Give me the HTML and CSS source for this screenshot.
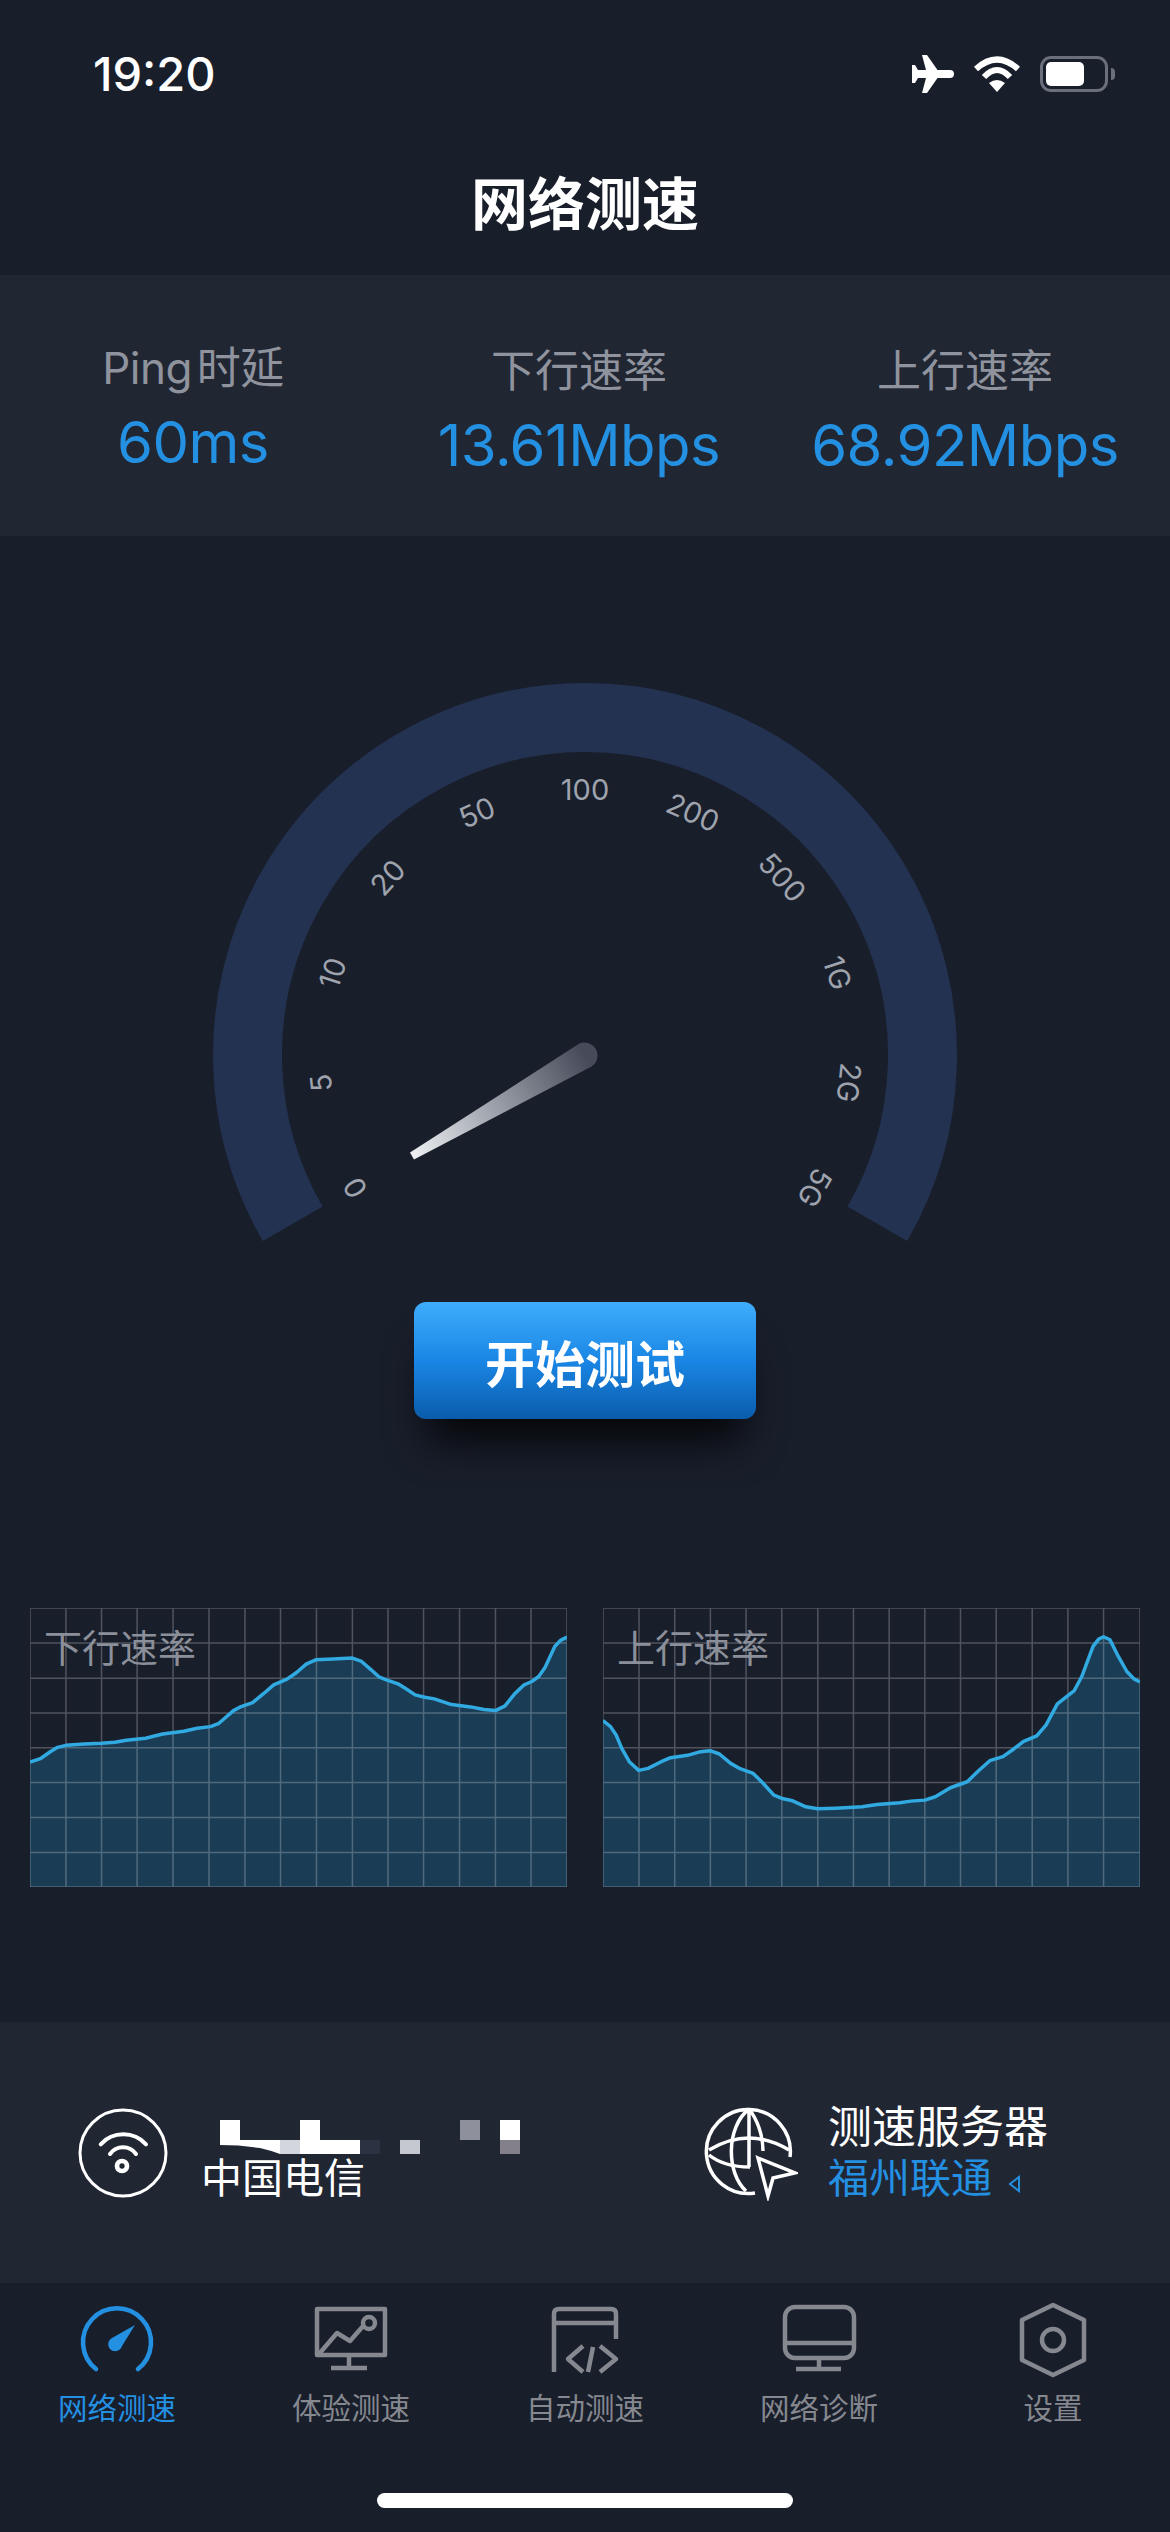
FILE: index.html
```html
<!DOCTYPE html>
<html lang="zh-CN">
<head>
  <meta charset="UTF-8">
  <meta name="viewport" content="width=device-width, initial-scale=1.0">
  <title>网络测速</title>
  <link rel="stylesheet" href="styles.css">
</head>
<body>
  <div class="status">
    <span class="time">19:20</span>
    <div class="status-icons">
      <svg width="42" height="38" viewBox="0 0 42 38"><path fill="#fff" d="M38 15H25.5L15 0H10L14 15H6L3 10H0V28H3L6 23H14L10 38H15L25.5 23H38A4 4 0 0 0 38 15Z"/></svg>
      <svg width="48" height="36" viewBox="0 0 48 36"><path fill="none" stroke="#fff" stroke-width="6" d="M3 13Q24 -6 45 13M11 21Q24 7 37 21"/><path fill="#fff" d="M24 36L16 27Q24 21 32 27Z"/></svg>
      <div class="battery-wrap">
        <div class="battery"><div class="battery-level"></div></div>
        <div class="battery-nub"></div>
      </div>
    </div>
  </div>

  <h1 class="title">网络测速</h1>

  <div class="stats">
    <div class="stat stat-ping">
      <div class="stat-label">Ping 时延</div>
      <div class="stat-value">60ms</div>
    </div>
    <div class="stat">
      <div class="stat-label">下行速率</div>
      <div class="stat-value">13.61Mbps</div>
    </div>
    <div class="stat">
      <div class="stat-label">上行速率</div>
      <div class="stat-value">68.92Mbps</div>
    </div>
  </div>

  <div class="gauge-section">
    <svg class="gauge" width="760" height="580" viewBox="0 0 760 580">
      <defs>
        <linearGradient id="needleGrad" gradientUnits="userSpaceOnUse" x1="207" y1="486" x2="380" y2="385">
          <stop offset="0" stop-color="#eef0f2"/>
          <stop offset="0.45" stop-color="#a0a6ae"/>
          <stop offset="1" stop-color="#474a59"/>
        </linearGradient>
      </defs>
      <path class="gauge-arc" d="M87.7 553.75A337.5 337.5 0 1 1 672.3 553.75"/>
      <g class="gauge-labels">
        <text x="380" y="130" transform="rotate(-120 380 385)">0</text>
        <text x="380" y="130" transform="rotate(-96 380 385)">5</text>
        <text x="380" y="130" transform="rotate(-72 380 385)">10</text>
        <text x="380" y="130" transform="rotate(-48 380 385)">20</text>
        <text x="380" y="130" transform="rotate(-24 380 385)">50</text>
        <text x="380" y="130">100</text>
        <text x="380" y="130" transform="rotate(24 380 385)">200</text>
        <text x="380" y="130" transform="rotate(48 380 385)">500</text>
        <text x="380" y="130" transform="rotate(72 380 385)">1G</text>
        <text x="380" y="130" transform="rotate(96 380 385)">2G</text>
        <text x="380" y="130" transform="rotate(120 380 385)">5G</text>
      </g>
      <path fill="url(#needleGrad)" d="M205 482.5L374 373.8A13 13 0 0 1 387 396.2L209 489.5Z"/>
    </svg>
    <button class="start-btn">开始测试</button>
  </div>

  <div class="charts">
    <div class="chart">
      <svg class="chart-svg" viewBox="78 85 1404 835" preserveAspectRatio="none">
        <polygon class="chart-fill" points="78,920 78,546 105,536 130,516 150,502 172,496 220,492 265,490 300,487 330,481 380,475 425,462 480,454 515,445 550,440 572,430 590,412 610,392 630,380 660,368 690,340 715,315 750,298 775,278 800,253 825,240 870,238 921,235 945,245 970,270 990,291 1010,300 1040,312 1060,326 1085,345 1110,352 1135,357 1180,374 1230,381 1265,389 1295,392 1320,378 1345,342 1370,315 1390,305 1408,290 1425,262 1450,200 1465,182 1482,172 1482,920"/>
        <path class="chart-grid" d="M78 85V920M172 85V920M265 85V920M358 85V920M452 85V920M546 85V920M640 85V920M733 85V920M827 85V920M921 85V920M1014 85V920M1107 85V920M1201 85V920M1295 85V920M1388 85V920M1482 85V920M78 85H1482M78 190H1482M78 295H1482M78 399H1482M78 503H1482M78 607H1482M78 712H1482M78 817H1482M78 920H1482"/>
        <polyline class="chart-line" points="78,546 105,536 130,516 150,502 172,496 220,492 265,490 300,487 330,481 380,475 425,462 480,454 515,445 550,440 572,430 590,412 610,392 630,380 660,368 690,340 715,315 750,298 775,278 800,253 825,240 870,238 921,235 945,245 970,270 990,291 1010,300 1040,312 1060,326 1085,345 1110,352 1135,357 1180,374 1230,381 1265,389 1295,392 1320,378 1345,342 1370,315 1390,305 1408,290 1425,262 1450,200 1465,182 1482,172"/>
      </svg>
      <span class="chart-label">下行速率</span>
    </div>
    <div class="chart">
      <svg class="chart-svg" viewBox="60 85 1430 835" preserveAspectRatio="none">
        <polygon class="chart-fill" points="60,920 60,422 80,440 95,465 110,505 130,545 155,571 180,565 215,545 240,533 285,526 320,515 345,512 370,522 400,550 425,566 460,580 485,608 515,645 540,656 565,662 600,680 632,686 680,684 750,680 790,673 850,668 880,663 917,660 945,650 985,623 1030,605 1060,572 1090,542 1125,530 1150,510 1180,484 1215,468 1240,435 1270,372 1315,332 1335,290 1365,200 1380,178 1393,171 1410,180 1430,225 1455,275 1475,298 1490,306 1490,920"/>
        <path class="chart-grid" d="M60 85V920M156 85V920M251 85V920M346 85V920M441 85V920M536 85V920M632 85V920M727 85V920M822 85V920M917 85V920M1012 85V920M1107 85V920M1203 85V920M1298 85V920M1393 85V920M1490 85V920M60 85H1490M60 190H1490M60 295H1490M60 399H1490M60 503H1490M60 607H1490M60 712H1490M60 817H1490M60 920H1490"/>
        <polyline class="chart-line" points="60,422 80,440 95,465 110,505 130,545 155,571 180,565 215,545 240,533 285,526 320,515 345,512 370,522 400,550 425,566 460,580 485,608 515,645 540,656 565,662 600,680 632,686 680,684 750,680 790,673 850,668 880,663 917,660 945,650 985,623 1030,605 1060,572 1090,542 1125,530 1150,510 1180,484 1215,468 1240,435 1270,372 1315,332 1335,290 1365,200 1380,178 1393,171 1410,180 1430,225 1455,275 1475,298 1490,306"/>
      </svg>
      <span class="chart-label">上行速率</span>
    </div>
  </div>

  <div class="info">
    <div class="info-group">
      <svg class="info-icon" width="96" height="96" viewBox="0 0 96 96">
        <circle cx="48" cy="48" r="43"/>
        <path class="wifi-arc" d="M25.7 39.3A30.8 30.8 0 0 1 71 39.3M35 49A16 16 0 0 1 61 49"/>
        <circle class="wifi-dot" cx="47" cy="61" r="5"/>
      </svg>
      <div class="isp">
        <svg class="mosaic" width="320" height="35" viewBox="0 0 320 35">
          <path fill="#fff" d="M19 0H39V20H79V34Q68 30 59 28Q40 25 19 25Z"/>
          <rect x="99" y="0" width="20" height="34" fill="#fff"/>
          <rect x="79" y="20" width="20" height="14" fill="#d3d6dc"/>
          <rect x="119" y="20" width="40" height="14" fill="#fff"/>
          <rect x="159" y="20" width="20" height="14" fill="#2d3242"/>
          <rect x="199" y="20" width="20" height="14" fill="#c5c8d0"/>
          <rect x="259" y="0" width="20" height="20" fill="#8e909c"/>
          <rect x="299" y="0" width="20" height="20" fill="#fff"/>
          <rect x="299" y="20" width="20" height="14" fill="#84808a"/>
        </svg>
        <div class="isp-name">中国电信</div>
      </div>
    </div>
    <div class="info-group">
      <svg class="info-icon globe" width="96" height="96" viewBox="0 0 96 96">
        <path d="M88 52A42 42 0 1 0 53 88"/>
        <path d="M47 4C24 22 24 68 44 86M47 4C55 14 61 30 61 46M47 4V62"/>
        <path d="M7 45Q47 21 87 45M7 50Q22 62 48 62"/>
        <path d="M56 53L93 68L71 73L66 91Z"/>
      </svg>
      <div class="server">
        <div class="server-title">测速服务器</div>
        <div class="server-name">福州联通
          <svg class="server-arrow" width="13" height="18" viewBox="0 0 13 18"><path d="M11 2V16L2 9Z"/></svg>
        </div>
      </div>
    </div>
  </div>

  <div class="tabbar">
    <div class="tabs">
      <div class="tab tab-active">
        <svg width="80" height="76" viewBox="0 0 80 76">
          <path d="M19 67A34 34 0 1 1 61 67"/>
          <path class="tab-solid" d="M58 23L45 44A7 7 0 1 1 35 36Z"/>
        </svg>
        <span>网络测速</span>
      </div>
      <div class="tab">
        <svg width="80" height="76" viewBox="0 0 80 76">
          <path d="M6 53V7H74V53Z"/>
          <path d="M8 52L26 31L39 39L53 23"/>
          <circle cx="58" cy="21" r="6"/>
          <path d="M38 54V66M20 66H56"/>
        </svg>
        <span>体验测速</span>
      </div>
      <div class="tab">
        <svg width="80" height="76" viewBox="0 0 80 76">
          <path d="M9 70V12Q9 7 14 7H66Q71 7 71 12V37M9 21H71"/>
          <path d="M38 44L23 57L38 70M48 45L43 70M55 44L71 57L55 70"/>
        </svg>
        <span>自动测速</span>
      </div>
      <div class="tab">
        <svg width="80" height="76" viewBox="0 0 80 76">
          <rect x="6" y="5" width="69" height="51" rx="10"/>
          <path d="M6 41H75M40 56V67M17 67H62"/>
        </svg>
        <span>网络诊断</span>
      </div>
      <div class="tab">
        <svg width="80" height="76" viewBox="0 0 80 76">
          <path d="M40 3L71 18V58L40 73L9 58V18Z"/>
          <circle cx="40" cy="38" r="11"/>
        </svg>
        <span>设置</span>
      </div>
    </div>
    <div class="home-bar"></div>
  </div>
</body>
</html>
```
FILE: styles.css
```css
body {
  margin: 0;
  background-color: #191e2b;
  font-family: Inter, "Noto Sans CJK SC", sans-serif;
  color: #fff;
}

/* status bar */
.status {
  display: flex;
  justify-content: space-between;
  align-items: center;
  height: 48px;
  padding: 50px 55px 0 93px;
}

.time {
  font-size: 47px;
  font-weight: 500;
  line-height: 48px;
}

.status-icons {
  display: flex;
  align-items: center;
  gap: 19px;
}

.battery-wrap {
  display: flex;
  align-items: center;
  gap: 3px;
}

.battery {
  box-sizing: border-box;
  width: 68px;
  height: 36px;
  padding: 3px;
  border: 3px solid #6b6f7b;
  border-radius: 11px;
}

.battery-level {
  width: 38px;
  height: 24px;
  background: #fff;
  border-radius: 5px;
}

.battery-nub {
  width: 4px;
  height: 12px;
  background: #6b6f7b;
  border-radius: 0 6px 6px 0;
}

.title {
  margin: 0;
  padding-top: 37px;
  height: 140px;
  line-height: 140px;
  text-align: center;
  font-size: 57px;
  font-weight: 700;
}

/* numbers under the header */
.stats {
  display: grid;
  grid-template-columns: repeat(3, 386px);
  height: 261px;
  background-color: #212633;
}

.stat {
  padding-top: 70px;
  text-align: center;
}

.stat-ping {
  padding-top: 67px;
}

.stat-label {
  font-size: 44px;
  line-height: 52px;
  word-spacing: -7px;
  color: #8f939d;
}

.stat-ping .stat-label {
  letter-spacing: -0.5px;
}

.stat-value {
  margin-top: 14px;
  font-size: 58px;
  line-height: 68px;
  letter-spacing: -0.5px;
  color: #2490e2;
}

/* gauge */
.gauge-section {
  display: flex;
  flex-direction: column;
  align-items: center;
  padding-top: 134px;
}

.gauge {
  display: block;
}

.gauge-arc {
  fill: none;
  stroke: #243252;
  stroke-width: 69;
}

.gauge-labels text {
  fill: #9ea3ad;
  font-size: 29px;
  font-weight: 400;
  text-anchor: middle;
}

.start-btn {
  width: 342px;
  height: 117px;
  margin-top: 52px;
  border: none;
  border-radius: 12px;
  background: linear-gradient(#3fadfb, #1a86e5 50%, #0a5cab);
  box-shadow: 0 36px 40px -14px rgba(0, 0, 0, 0.8);
  color: #fff;
  font-family: inherit;
  font-size: 50px;
  font-weight: 700;
}

/* charts */
.charts {
  display: flex;
  gap: 36px;
  padding: 0 30px;
  margin-top: 189px;
}

.chart {
  position: relative;
  flex: 1;
  height: 279px;
}

.chart-svg {
  display: block;
  width: 100%;
  height: 100%;
}

.chart-fill {
  fill: #1a3c55;
}

.chart-grid {
  fill: none;
  stroke: rgba(255, 255, 255, 0.24);
  stroke-width: 1.5px;
  vector-effect: non-scaling-stroke;
}

.chart-line {
  fill: none;
  stroke: #31aae2;
  stroke-width: 3.5px;
  stroke-linejoin: round;
  vector-effect: non-scaling-stroke;
}

.chart-label {
  position: absolute;
  top: 18px;
  left: 14px;
  font-size: 38px;
  line-height: 44px;
  color: #8b8f99;
}

/* isp and server */
.info {
  display: grid;
  grid-template-columns: 627px 1fr;
  height: 178px;
  padding: 83px 0 0 75px;
  margin-top: 135px;
  background-color: #212633;
}

.info-group {
  display: flex;
  gap: 30px;
}

.info-icon {
  flex: none;
  fill: none;
  stroke: #fff;
  stroke-width: 3;
}

.globe {
  stroke-width: 3.5;
}

.wifi-arc {
  stroke-width: 4;
  stroke-linecap: round;
}

.wifi-dot {
  stroke-width: 4.7;
}

.isp {
  padding-top: 15px;
}

.mosaic {
  display: block;
}

.isp-name {
  font-size: 41px;
  line-height: 46px;
}

.server {
  margin-top: -3px;
}

.server-title {
  font-size: 44px;
  line-height: 50px;
}

.server-name {
  margin-top: 2px;
  font-size: 41px;
  line-height: 48px;
  color: #2490e2;
}

.server-arrow {
  margin-left: 4px;
  fill: none;
  stroke: #2490e2;
  stroke-width: 2;
}

/* bottom tabs */
.tabs {
  display: grid;
  grid-template-columns: repeat(5, 1fr);
  padding-top: 19px;
}

.tab {
  display: flex;
  flex-direction: column;
  align-items: center;
  color: #85888f;
  font-size: 29.5px;
  line-height: 34px;
}

.tab svg {
  display: block;
  margin-bottom: 13px;
  fill: none;
  stroke: #85888f;
  stroke-width: 4.5;
  stroke-linejoin: round;
}

.tab-active {
  color: #2490e2;
}

.tab-active svg {
  stroke: #2490e2;
  stroke-linecap: round;
}

.tab-solid {
  fill: #2490e2;
  stroke: none;
}

.home-bar {
  width: 416px;
  height: 15px;
  margin: 68px auto 0;
  background: #fff;
  border-radius: 8px;
}
```
